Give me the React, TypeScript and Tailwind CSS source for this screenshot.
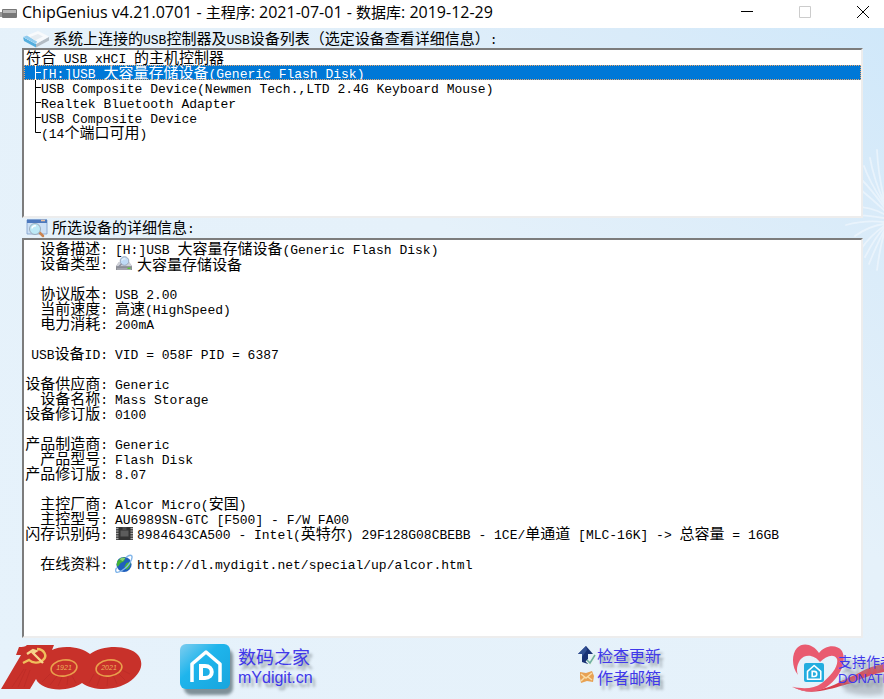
import { useState, type ReactNode } from "react";

const devices = [
  { branch: "", name: "符合 USB xHCI 的主机控制器" },
  { branch: "mid", name: "[H:]USB 大容量存储设备(Generic Flash Disk)" },
  { branch: "mid", name: "USB Composite Device(Newmen Tech.,LTD 2.4G Keyboard Mouse)" },
  { branch: "mid", name: "Realtek Bluetooth Adapter" },
  { branch: "mid", name: "USB Composite Device" },
  { branch: "end", name: "(14个端口可用)" },
];

interface Detail {
  label: string;
  value: string;
  icon?: ReactNode;
  href?: string;
}

const groups: Detail[][] = [
  [
    { label: "设备描述", value: "[H:]USB 大容量存储设备(Generic Flash Disk)" },
    { label: "设备类型", value: "大容量存储设备", icon: <DriveIcon /> },
  ],
  [
    { label: "协议版本", value: "USB 2.00" },
    { label: "当前速度", value: "高速(HighSpeed)" },
    { label: "电力消耗", value: "200mA" },
  ],
  [{ label: "USB设备ID", value: "VID = 058F PID = 6387" }],
  [
    { label: "设备供应商", value: "Generic" },
    { label: "设备名称", value: "Mass Storage" },
    { label: "设备修订版", value: "0100" },
  ],
  [
    { label: "产品制造商", value: "Generic" },
    { label: "产品型号", value: "Flash Disk" },
    { label: "产品修订版", value: "8.07" },
  ],
  [
    { label: "主控厂商", value: "Alcor Micro(安国)" },
    { label: "主控型号", value: "AU6989SN-GTC [F500] - F/W FA00" },
    {
      label: "闪存识别码",
      value: "8984643CA500 - Intel(英特尔) 29F128G08CBEBB - 1CE/单通道 [MLC-16K] -> 总容量 = 16GB",
      icon: <ChipIcon />,
    },
  ],
  [
    {
      label: "在线资料",
      value: "http://dl.mydigit.net/special/up/alcor.html",
      icon: <GlobeIcon />,
      href: "http://dl.mydigit.net/special/up/alcor.html",
    },
  ],
];

// Latin runs get their own face and size, so two mono letters take about one CJK cell
function Mixed({
  text,
  latin = "font-['Liberation_Mono',monospace] text-[13px]",
}: {
  text: string;
  latin?: string;
}) {
  return (
    <>
      {text.split(/([\x20-\x7e]+)/).map((run, i) =>
        i % 2 === 1 ? (
          <span key={i} className={latin}>
            {run}
          </span>
        ) : (
          run
        ),
      )}
    </>
  );
}

function DriveIcon() {
  return (
    <svg viewBox="0 0 18 15" className="h-[15px] w-[18px]" aria-hidden="true">
      <path d="m4 6-3 4v4h16v-4l-3-4z" fill="#9b9da5" />
      <path d="m4 6-3 4h16l-3-4z" fill="#cfd1d8" />
      <path d="M1 10.500h16V14H1z" fill="#8c8e96" />
      <path d="M2 13h14" stroke="#b9bbc2" />
      <circle cx="9.500" cy="5" r="4.300" fill="#bfdaf5" stroke="#9aa7bd" />
      <path d="M7 4.500c.5-1.500 2-2 3.500-1.500" stroke="#fff" fill="none" />
      <path d="m6.500 8-3 3" stroke="#8b8fa0" strokeWidth="1.500" />
      <path d="M12.500 11.500h3V13h-3z" fill="#5cc43c" />
    </svg>
  );
}

function ChipIcon() {
  return (
    <svg viewBox="0 0 18 15" className="h-[15px] w-[18px]" aria-hidden="true">
      <path d="M1 1h17v13H1z" fill="#4c4c4c" />
      <path d="M1 2.500h17M1 5h17M1 7.500h17M1 10h17M1 12.500h17" stroke="#aaa" strokeWidth="1" />
      <path d="M3.500 1h12v13h-12z" fill="#333" />
      <path d="M5.500 4.500h8v6h-8z" fill="#5c5c5c" />
      <path d="M7.500 1h4v3h-4z" fill="#4d4d4d" />
    </svg>
  );
}

function GlobeIcon() {
  return (
    <svg viewBox="0 0 19 20" className="h-5 w-[18px]" aria-hidden="true">
      <circle cx="9.500" cy="10.500" r="8" fill="#1f5fbd" />
      <path d="M4 5.500c2-2 5-3 7-2L9.500 7 6 9 3 13c-2-2-1-6 1-7.500zM12 9l4-1c1 3-1 7-4 8l-2-3z" fill="#45b438" />
      <path d="M5 5c2-2 4-2 6-1L8 7z" fill="#a8e08e" opacity=".7" />
      <path d="M12 3c3-3 6-3 6 0s-4 9-8 12-8 5-9 3 0-3 1-4" fill="none" stroke="#84b7ea" strokeWidth="1.500" />
    </svg>
  );
}

function HubIcon() {
  return (
    <svg viewBox="0 0 28 18" className="h-[18px] w-7" aria-hidden="true">
      <path d="m1 7 13 7v3.500L2 11z" fill="#54aede" />
      <path d="m14 14 13-7v3.500l-13 7z" fill="#b3bcc4" />
      <path d="M1 7 16 1l11 5.500L14 14z" fill="#f8fafc" />
      <path d="m1 7 4-1.500 10 6-1 2.500z" fill="#8fcbee" />
      <path d="m8 7 8-3 5 2.500-8 4z" fill="#e6ecf1" />
    </svg>
  );
}

function InspectIcon() {
  return (
    <svg viewBox="0 0 22 20" className="h-5 w-[22px]" aria-hidden="true">
      <path d="M1 2h20v14H1z" fill="#cbdff5" stroke="#7c9cc9" strokeWidth=".8" />
      <path d="M1 1.500h20V5H1z" fill="#4c78bd" />
      <path d="M15 2.500h4" stroke="#eac0a0" strokeWidth="1.500" />
      <path d="m13 14 4 4" stroke="#c98452" strokeWidth="2.500" strokeLinecap="round" />
      <circle cx="9" cy="11" r="5.500" fill="#bde9f6" stroke="#9badbd" />
      <path d="M6 10.500c0-2 2-3 4-2.500" stroke="#fff" strokeWidth="1.500" fill="none" />
    </svg>
  );
}

function CentenaryLogo() {
  return (
    <svg viewBox="0 0 142 50" className="h-[50px] w-[142px]" role="img" aria-label="100">
      <path
        d="M27 1h27l-2 5c9-5 29-4 38 4 9-7 27-9 38-5 16 5 17 19 6 29-12 12-38 15-52 5-14 10-41 8-46-4l-6 10H1l20-34h-5l3-8c3 0 6 0 8-2z"
        fill="#c8312a"
      />
      <g stroke="#ab2521" strokeWidth=".6" opacity=".6">
        <path d="m12 43 12-18m-6 18 8-18m-2 18 6-17m12 12 8-8m0 11 7-9m1 10 4-9m5 8 1-8m8 6-4-7m17 7 5-9m3 12 4-11m6 11 1-11m9 9-4-9m12 5-6-6m11 0-8-4" />
      </g>
      <ellipse cx="64" cy="24" rx="13" ry="8" fill="none" stroke="#e9a04c" strokeWidth="1.600" transform="rotate(-8 64 24)" />
      <ellipse cx="109" cy="24" rx="13" ry="8" fill="none" stroke="#e9a04c" strokeWidth="1.600" transform="rotate(-8 109 24)" />
      <text x="64" y="26" textAnchor="middle" fontSize="7" fontFamily="Liberation Sans, sans-serif" fontStyle="italic" fill="#edaf5b">
        1921
      </text>
      <text x="109" y="26" textAnchor="middle" fontSize="7" fontFamily="Liberation Sans, sans-serif" fontStyle="italic" fill="#edaf5b">
        2021
      </text>
      <path d="M37 5c7 0 11 7 6 11-4 4-11 3-14 0l-6 3" fill="none" stroke="#f0bf5c" strokeWidth="2.400" />
      <path d="m27 10 6-4 3 1-3 2 10 10" fill="none" stroke="#f6d58a" strokeWidth="2.400" />
    </svg>
  );
}

function HouseMark() {
  return (
    <>
      <path d="M9 24 26 9l17 15v20H9z" fill="none" stroke="#fff" strokeWidth="4" strokeLinejoin="round" />
      <path d="M21 24h5c9 0 9 13 0 13h-5z" fill="none" stroke="#fff" strokeWidth="4" />
    </>
  );
}

function HouseLogo() {
  return (
    <svg viewBox="0 0 56 54" className="h-[54px] w-14" aria-hidden="true">
      <defs>
        <linearGradient id="house" x1="0" y1="0" x2="1" y2="1">
          <stop offset="0" stopColor="#7fcdef" />
          <stop offset=".4" stopColor="#1fb5ec" />
          <stop offset="1" stopColor="#18a5dd" />
        </linearGradient>
        <filter id="soft">
          <feGaussianBlur stdDeviation="1.500" />
        </filter>
      </defs>
      <rect x="4" y="5" width="49" height="46" rx="7" fill="#7f9098" filter="url(#soft)" />
      <rect x="0" y="0" width="50" height="45" rx="6" fill="url(#house)" />
      {/* The house is open at the bottom */}
      <path d="M12 38V20L26 8l14 12v18" fill="none" stroke="#fff" strokeWidth="3.500" strokeLinejoin="round" />
      <path d="M21 22h4c9 0 9 12 0 12h-4z" fill="none" stroke="#fff" strokeWidth="4" />
    </svg>
  );
}

function HeartLogo() {
  return (
    <svg viewBox="0 0 92 56" className="h-14 w-[92px]" aria-hidden="true">
      <defs>
        <filter id="haze">
          <feGaussianBlur stdDeviation="2" />
        </filter>
      </defs>
      <path d="M55 28h37v22c-14 3-30 1-40-3z" fill="#aab2ba" opacity=".7" filter="url(#haze)" />
      <path d="M46 38c18-5 27-16 46-18v8c-14 2-27 10-42 13z" fill="#d9505f" />
      <path
        d="M0 42c12 8 30 5 46-3l14 0c-12 3-20 6-32 8-11 2-21 0-28-5z"
        fill="#d8404e"
      />
      <path
        d="M6 31C0 24-1 11 5 4c6-6 16-4 22 5 6-8 18-9 23-2 6 12-4 29-17 37-10 5-22 4-33-1 12 2 22 2 30-4 9-7 17-17 15-24-3-6-11-3-17 3-5-7-15-9-20-2-3 5-4 10-2 15z"
        fill="#e95b70"
      />
      <rect x="12" y="19" width="20" height="19" rx="2" fill="#23addf" />
      <g transform="translate(12 18) scale(.39)">
        <HouseMark />
      </g>
    </svg>
  );
}

function Feather() {
  return (
    <svg viewBox="0 0 50 170" className="pointer-events-none absolute top-[110px] right-0 h-[170px] w-[50px]" aria-hidden="true">
      <g fill="none" stroke="#f3f9fe" strokeLinecap="round" strokeWidth="1.800" opacity=".6">
        <path d="M50 66Q35 43 30 28M50 64Q40 42 36 20M50 60Q44 35 43 12M50 69Q38 52 27 41M50 72Q38 61 27 52M50 76Q34 68 20 69M50 80Q25 76 10 77M50 84Q30 82 12 87M50 86Q35 88 21 98M50 88Q36 98 27 111M50 90Q42 98 31 119M50 93Q43 106 35 126M50 96Q46 109 43 132" />
      </g>
    </svg>
  );
}

function TreeBranch({ end }: { end: boolean }) {
  return (
    <svg viewBox="0 0 6 15" className="ml-[11px] h-[15px] w-1.5" fill="none" stroke="currentColor" aria-hidden="true">
      <path d={end ? "M.5 0v7.500H6" : "M.5 0v15M.5 7.500H6"} />
    </svg>
  );
}

const panel =
  "border-2 border-t-[#7c7c7c] border-l-[#7c7c7c] border-r-[#ededed] border-b-[#ededed] bg-white";

const footerText = "text-[#4038ea] [text-shadow:3px_4px_3px_#8c969e]";

const titleButton = "flex h-7 w-[42px] items-center justify-center";

export default function App() {
  const [selected, setSelected] = useState(1);

  return (
    <div className="flex min-h-screen flex-col overflow-hidden bg-white font-['Noto_Sans_CJK_SC',sans-serif] text-[15px] text-black">
      {/* Title bar */}
      <header className="flex h-7 items-center">
        <svg viewBox="0 0 18 12" className="h-3 w-[18px]" aria-hidden="true">
          <path d="M0 4h3v5H0z" fill="#999" />
          <rect x="2" y="1" width="15" height="9" rx="1" fill="#777" />
          <path d="M3 2h13v3H3z" fill="#b8b8b8" />
        </svg>
        <h1 className="ml-1 pb-1 leading-6 whitespace-nowrap">
          <Mixed
            text="ChipGenius v4.21.0701 - 主程序: 2021-07-01 - 数据库: 2019-12-29"
            latin="font-['Open_Sans',sans-serif] text-base leading-6"
          />
        </h1>
        <div className="ml-auto flex items-center gap-4 pb-1">
          <button type="button" aria-label="最小化" className={titleButton}>
            <svg viewBox="0 0 12 12" className="size-3" stroke="#000">
              <path d="M0 5.500h12" />
            </svg>
          </button>
          <button type="button" aria-label="最大化" disabled className={titleButton}>
            <svg viewBox="0 0 12 12" className="size-3" fill="none" stroke="#ccc">
              <path d="M.5.5h11v11H.5z" />
            </svg>
          </button>
          <button type="button" aria-label="关闭" className={titleButton}>
            <svg viewBox="0 0 12 12" className="size-3" stroke="#000">
              <path d="m0 0 12 12M12 0 0 12" />
            </svg>
          </button>
        </div>
      </header>

      <main className="relative flex grow flex-col bg-[#e4f0fa] bg-[linear-gradient(to_bottom_left,#d0e8fa_0%,#d9ebf9_15%,#e5f1fa_40%,#e6f2fb_100%)]">
        <Feather />

        <section className="relative pr-[21px] pl-[22px]">
          <h2 id="device-list" className="flex h-5 items-center gap-1 pt-0.5 leading-5">
            <HubIcon />
            <span className="-ml-px whitespace-nowrap">
              <Mixed text="系统上连接的USB控制器及USB设备列表（选定设备查看详细信息）:" />
            </span>
          </h2>
          <ul role="listbox" aria-labelledby="device-list" className={`h-[170px] ${panel}`}>
            {devices.map((device, i) => (
              <li
                key={i}
                role="option"
                aria-selected={i === selected}
                onClick={() => setSelected(i)}
                className={`flex h-[15px] items-center leading-[15px] whitespace-pre ${
                  i === selected
                    ? "bg-[#0078d7] text-white outline-1 -outline-offset-1 outline-[#e8a66c] outline-dotted"
                    : ""
                }`}
              >
                {device.branch ? <TreeBranch end={device.branch === "end"} /> : null}
                <span className={device.branch ? "" : "pl-0.5"}>
                  <Mixed text={device.name} />
                </span>
              </li>
            ))}
          </ul>
        </section>

        <section className="relative flex grow flex-col pr-[21px] pl-[22px]">
          <h2 className="flex h-5 items-center gap-1 pl-1 leading-5">
            <InspectIcon />
            <span>
              <Mixed text="所选设备的详细信息:" />
            </span>
          </h2>
          <div className={`flex grow flex-col gap-[15px] pt-px ${panel}`}>
            {groups.map((group, g) => (
              <dl key={g}>
                {group.map((row) => (
                  <div key={row.label} className="flex h-[15px] items-center leading-[15px] whitespace-pre">
                    <dt className="flex w-[91px] justify-end pr-[7px]">
                      <span>
                        <Mixed text={`${row.label}:`} />
                      </span>
                    </dt>
                    <dd className="flex items-center gap-1">
                      {row.icon}
                      {row.href ? (
                        <a href={row.href}>
                          <Mixed text={row.value} />
                        </a>
                      ) : (
                        <span>
                          <Mixed text={row.value} />
                        </span>
                      )}
                    </dd>
                  </div>
                ))}
              </dl>
            ))}
          </div>
        </section>

        {/* Links */}
        <footer className="relative grid h-[61px] grid-cols-[180px_1fr_214px_92px] overflow-hidden pt-1.5 whitespace-nowrap">
          <CentenaryLogo />
          <a href="#mydigit" className={`flex items-start gap-0.5 ${footerText}`}>
            <HouseLogo />
            <span className="flex flex-col">
              <span className="text-lg leading-6">数码之家</span>
              <span className="font-['Liberation_Sans',sans-serif] text-base leading-5">mYdigit.cn</span>
            </span>
          </a>
          <nav className={`flex flex-col text-base leading-[22px] ${footerText}`}>
            <a href="#update" className="flex items-center gap-px">
              <svg viewBox="0 0 18 20" className="h-5 w-[18px]" aria-hidden="true">
                <path d="M8 1 0 9h4v8l6 2V9h5z" fill="#183174" />
                <path d="M8 1 0 9h4v3l5-7z" fill="#304f93" />
                <path d="m9 15 3 3 5-8" fill="none" stroke="#e6f3ee" strokeWidth="4" />
                <path d="m9 15 3 3 5-8" fill="none" stroke="#6eaf9f" strokeWidth="1.500" />
              </svg>
              检查更新
            </a>
            <a href="#mail" className="flex items-center gap-px">
              <svg viewBox="0 0 18 16" className="h-4 w-[18px]" aria-hidden="true">
                <path d="m2 3 6 1 6-2 2 5-1 6-6-1-6 2-1-5z" fill="#e7a153" />
                <path d="m3 5 5 4 6-5M3 12l4-4m7 3-4-3" fill="none" stroke="#f9dca5" strokeWidth="1.500" />
              </svg>
              作者邮箱
            </a>
          </nav>
          <a href="#donate" className={`relative block ${footerText}`}>
            <HeartLogo />
            <span className="absolute top-2 left-[46px] flex flex-col leading-[18px]">
              <span className="text-sm leading-[18px]">支持作者</span>
              <span className="font-['Liberation_Sans',sans-serif] text-[13px] leading-[18px]">DONATE</span>
            </span>
          </a>
        </footer>
      </main>
    </div>
  );
}
